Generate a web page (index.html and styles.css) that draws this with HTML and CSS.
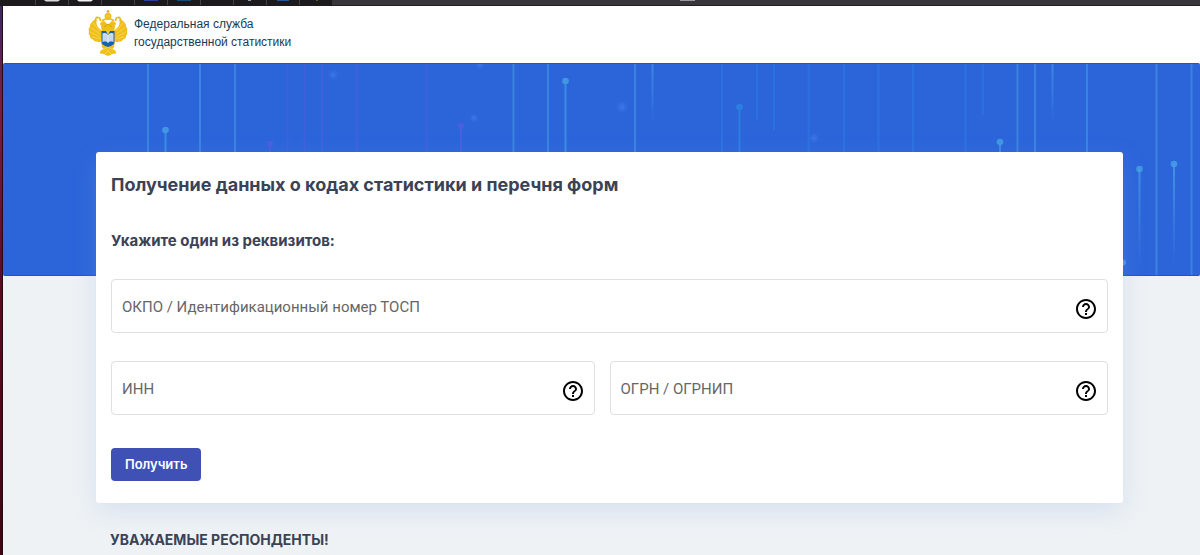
FILE: index.html
```html
<!DOCTYPE html>
<html lang="ru">
<head>
<meta charset="utf-8">
<meta name="viewport" content="width=device-width, initial-scale=1">
<title>Получение данных о кодах статистики</title>
<link rel="stylesheet" href="styles.css">
</head>
<body>
<div class="tabbar">
  <svg class="tabs" viewBox="0 0 700 6" width="700" height="6" aria-hidden="true">
    <rect width="332" height="6" fill="#1c1a1d"/>
    <path d="M35.500 0V5M68.500 0V5M101.500 0V5M134.500 0V5M167.500 0V5M200.500 0V5M233.500 0V5M266.500 0V5M299.500 0V5" stroke="#454247"/>
    <path d="M44 0H60L58 1.500H46Z" fill="#d9d9d9"/>
    <path d="M77 0H93L91 1.500H79Z" fill="#f1f1f1"/>
    <path d="M144 0H158V1H144Z" fill="#2a3fa0"/>
    <path d="M177 0H191V1H177Z" fill="#1d4d74"/>
    <path d="M248 0H251V1H248Z" fill="#8d9bb0"/>
    <path d="M277 0H289V1H277Z" fill="#235a93"/>
    <path d="M316 0H318V1H316Z" fill="#5b5528"/>
    <path d="M680 0H695V1H680Z" fill="#9a989c"/>
  </svg>
</div>
<div class="shell">
  <div class="edge"></div>
  <div class="page">
    <header class="header">
      <a class="brand" href="#">
        <svg class="emblem" viewBox="0 0 40 48" aria-hidden="true">
          <g fill="#f0bf1a">
            <path d="M20 1V4M18.500 2.300H21.500" stroke="#e2aa08" stroke-width="1.200"/>
            <path d="M16.500 7Q16.500 4.500 20 3.500Q23.500 4.500 23.500 7L22.500 11H17.500Z"/>
            <path d="M13 17L12 14.500Q13.500 11.500 17 12.500L19 15H21L23 12.500Q26.500 11.500 28 14.500L27 17L26 24H14Z"/>
            <path d="M14 22L11 19Q8 16 8.500 12Q7 9 5 12Q1.500 15 2 18Q0 19 1 22Q0 25 2 27Q2 30 5 30.500Q6 33 9 32.500Q11 34 14 32Z"/>
            <path d="M26 22L29 19Q32 16 31.500 12Q33 9 35 12Q38.500 15 38 18Q40 19 39 22Q40 25 38 27Q38 30 35 30.500Q34 33 31 32.500Q29 34 26 32Z"/>
            <path d="M13 33L20 36L27 33L26 38L24.500 40Q28.500 41 28 44.500L24 45L22.500 46L20 47L17.500 46L16 45L12 44.500Q11.500 41 15.500 40L14 38Z"/>
          </g>
          <path d="M8 12Q7 8 10 8.500Q13 9 12 12M32 12Q33 8 30 8.500Q27 9 28 12M14 12L17 10M26 12L23 10" fill="none" stroke="#ebb619" stroke-width="1.700"/>
          <path d="M3 19L12 25M2 23L12 28M4 28L13 30M37 19L28 25M38 23L28 28M36 28L27 30M5 14L12 22M35 14L28 22M15 41L20 38L25 41M17 45L20 41L23 45M18 7H22" fill="none" stroke="#f8dc65" stroke-width=".7"/>
          <path d="M16 18L20 15L24 18" fill="none" stroke="#cf9b0a" stroke-width=".8"/>
          <path d="M13.500 22H26.500V33Q26.500 36 20 38Q13.500 36 13.500 33Z" fill="#1461b0"/>
          <path d="M14.500 24.500Q18 23 20 26Q22 23 25.500 24.500V33Q22 31 20 34Q18 31 14.500 33Z" fill="#d5e1ee"/>
          <path d="M16 26V32M18 26V32M22 26V32M24 26V32" stroke="#a3bfdc" stroke-width=".6"/>
          <path d="M18 22H22L20 26Z" fill="#f0ca47"/>
        </svg>
        <span class="brand-name">Федеральная служба<br>государственной статистики</span>
      </a>
    </header>
    <div class="hero">
      <svg class="hero-art" viewBox="3 64 1197 211" preserveAspectRatio="xMinYMin slice" aria-hidden="true">
        <defs>
          <linearGradient id="down" gradientUnits="userSpaceOnUse" x1="0" y1="63" x2="0" y2="125"><stop stop-color="#479de8" stop-opacity=".65"/><stop offset="1" stop-color="#479de8" stop-opacity="0"/></linearGradient>
          <linearGradient id="tail" gradientUnits="userSpaceOnUse" x1="0" y1="165" x2="0" y2="265"><stop stop-color="#479de8" stop-opacity=".8"/><stop offset="1" stop-color="#479de8" stop-opacity="0"/></linearGradient>
          <radialGradient id="glow"><stop stop-color="#4a86f0" stop-opacity=".6"/><stop offset="1" stop-color="#3972e4" stop-opacity="0"/></radialGradient>
        </defs>
        <path d="M148 63V160M200 63V160M235 63V160M513.500 63V160M548 63V160M635 63V160M1017.500 63V160M1035 63V160M1087 63V160M1156.500 63V276M1191.500 63V276" stroke="#3d8ae0" stroke-width="2" opacity=".85"/>
        <path d="M287.500 63V160M304.500 63V160M322 63V160M357 63V160M426.500 63V160" stroke="#4660df" stroke-width="2" opacity=".7"/>
        <path d="M722 63V160M808.500 63V160M844 63V160M878.500 63V160M913 63V160M965.500 63V160" stroke="#2b76e2" stroke-width="2" opacity=".8"/>
        <path d="M757 63V120M774 63V130M983 63V115" stroke="#2b76e2" stroke-width="2" opacity=".7"/>
        <rect x="651.500" y="63" width="2" height="62" fill="url(#down)"/>
        <rect x="1051.500" y="63" width="2" height="85" fill="url(#down)"/>
        <g fill="#4096e3">
          <circle cx="165.500" cy="130" r="3.300"/><circle cx="565.500" cy="81" r="3.300"/><circle cx="1000" cy="142" r="3.300"/><circle cx="1139.500" cy="169" r="3.300"/><circle cx="1174" cy="164" r="3.300"/><circle cx="1123" cy="262.500" r="3"/>
          <path d="M164.500 130H166.500V160H164.500ZM564.500 81H566.500V160H564.500ZM999 142H1001V160H999Z" opacity=".8"/>
        </g>
        <rect x="1138.500" y="169" width="2" height="96" fill="url(#tail)"/>
        <rect x="1173" y="164" width="2" height="101" fill="url(#tail)"/>
        <g fill="#4660df"><circle cx="270" cy="144" r="3.300"/><circle cx="461" cy="126" r="3.300"/><path d="M269 144H271V160H269ZM460 126H462V160H460Z"/></g>
        <g fill="#2b7fe1"><circle cx="739.500" cy="107" r="3.300"/><path d="M738.500 107H740.500V160H738.500Z"/></g>
        <g fill="url(#glow)"><circle cx="333" cy="75" r="6"/><circle cx="480" cy="65" r="5"/><circle cx="474" cy="118" r="5"/><circle cx="622" cy="107" r="7"/><circle cx="814" cy="138" r="6"/></g>
      </svg>
    </div>
    <main class="content">
      <form class="card">
        <h1 class="title">Получение данных о кодах статистики и перечня форм</h1>
        <h2 class="subtitle">Укажите один из реквизитов:</h2>
        <div class="fields">
          <div class="field field-wide">
            <input class="field-input" type="text" aria-label="ОКПО / Идентификационный номер ТОСП" placeholder="ОКПО / Идентификационный номер ТОСП">
            <button class="help" type="button" aria-label="Справка: ОКПО"><svg class="help-icon" viewBox="2 2 20 20" aria-hidden="true"><path d="M11 18h2v-2h-2v2zm1-16C6.480 2 2 6.480 2 12s4.480 10 10 10 10-4.480 10-10S17.520 2 12 2zm0 18c-4.410 0-8-3.590-8-8s3.590-8 8-8 8 3.590 8 8-3.590 8-8 8zm0-14c-2.210 0-4 1.790-4 4h2c0-1.100.9-2 2-2s2 .9 2 2c0 2-3 1.750-3 5h2c0-2.250 3-2.500 3-5 0-2.210-1.790-4-4-4z"/></svg></button>
          </div>
          <div class="field">
            <input class="field-input" type="text" aria-label="ИНН" placeholder="ИНН">
            <button class="help" type="button" aria-label="Справка: ИНН"><svg class="help-icon" viewBox="2 2 20 20" aria-hidden="true"><path d="M11 18h2v-2h-2v2zm1-16C6.480 2 2 6.480 2 12s4.480 10 10 10 10-4.480 10-10S17.520 2 12 2zm0 18c-4.410 0-8-3.590-8-8s3.590-8 8-8 8 3.590 8 8-3.590 8-8 8zm0-14c-2.210 0-4 1.790-4 4h2c0-1.100.9-2 2-2s2 .9 2 2c0 2-3 1.750-3 5h2c0-2.250 3-2.500 3-5 0-2.210-1.790-4-4-4z"/></svg></button>
          </div>
          <div class="field">
            <input class="field-input" type="text" aria-label="ОГРН / ОГРНИП" placeholder="ОГРН / ОГРНИП">
            <button class="help" type="button" aria-label="Справка: ОГРН"><svg class="help-icon" viewBox="2 2 20 20" aria-hidden="true"><path d="M11 18h2v-2h-2v2zm1-16C6.480 2 2 6.480 2 12s4.480 10 10 10 10-4.480 10-10S17.520 2 12 2zm0 18c-4.410 0-8-3.590-8-8s3.590-8 8-8 8 3.590 8 8-3.590 8-8 8zm0-14c-2.210 0-4 1.790-4 4h2c0-1.100.9-2 2-2s2 .9 2 2c0 2-3 1.750-3 5h2c0-2.250 3-2.500 3-5 0-2.210-1.790-4-4-4z"/></svg></button>
          </div>
        </div>
        <button class="submit" type="submit">Получить</button>
      </form>
      <h2 class="notice">УВАЖАЕМЫЕ РЕСПОНДЕНТЫ!</h2>
    </main>
  </div>
</div>
</body>
</html>
```
FILE: styles.css
```css
* {
  box-sizing: border-box;
}

body {
  display: flex;
  flex-direction: column;
  min-height: 100vh;
  margin: 0;
  overflow: hidden;
  background: #eef2f5;
  color: #3b4255;
  font-family: Inter, "Liberation Sans", sans-serif;
}

.tabbar {
  height: 6px;
  background: #38363a;
  border-bottom: 1px solid #231f22;
}

.tabs {
  display: block;
}

.shell {
  display: flex;
  flex: 1;
}

.edge {
  width: 3px;
  background: linear-gradient(#382b63, #7b1d3c 18%, #5c0c24 50%, #3d0613);
  border-right: 1px solid #260a14;
}

.page {
  flex: 1;
  min-width: 0;
}

.header {
  display: flex;
  align-items: center;
  height: 57px;
  padding: 0 85px 4px;
  background: #fff;
}

.brand {
  display: flex;
  align-items: center;
  gap: 6px;
  color: #173b57;
  text-decoration: none;
}

.emblem {
  width: 40px;
  height: 48px;
}

.brand-name {
  font: 12px/18px "Liberation Sans", Arial, sans-serif;
}

.hero {
  height: 213px;
  background: #2c65da;
  border-top: 1px solid #1c55cf;
  border-bottom: 1px solid #1c55cf;
  border-radius: 2px;
}

.hero-art {
  display: block;
  width: 100%;
  height: 100%;
}

.content {
  position: relative;
  margin-top: -124px;
  padding: 0 77px 0 93px;
}

.card {
  padding: 20px 15px 22px;
  background: #fff;
  border-radius: 3px;
  box-shadow: 0 8px 24px rgba(130, 165, 215, .22);
}

.title {
  margin: 0;
  font-size: 18px;
  line-height: 26px;
  font-weight: 700;
}

.subtitle {
  margin: 32px 0 27px;
  font-size: 15px;
  line-height: 22px;
  font-weight: 700;
}

.fields {
  display: grid;
  grid-template-columns: 484fr 499fr;
  gap: 28px 15px;
}

.field {
  display: flex;
  align-items: center;
  height: 54px;
  padding: 0 11px 0 10px;
  border: 1px solid #e0e0e0;
  border-radius: 4px;
}

.field-wide {
  grid-column: 1 / -1;
}

.field-input {
  flex: 1;
  min-width: 0;
  padding: 2px 0 0;
  border: 0;
  outline: 0;
  background: none;
  color: #333;
  font: 15px/20px Roboto, "Liberation Sans", sans-serif;
}

.field-input::placeholder {
  color: #666;
  opacity: 1;
}

.help {
  display: flex;
  padding: 6px 0 0;
  border: 0;
  background: none;
}

.help-icon {
  width: 20px;
  height: 20px;
}

.submit {
  display: block;
  height: 33px;
  margin-top: 33px;
  padding: 0 14px;
  border: 0;
  border-radius: 4px;
  background: #3f51b5;
  color: #fff;
  font: 600 13px/33px Inter, "Liberation Sans", sans-serif;
}

.notice {
  margin: 27px 14px 0;
  font-size: 14px;
  line-height: 20px;
  font-weight: 700;
}
```
